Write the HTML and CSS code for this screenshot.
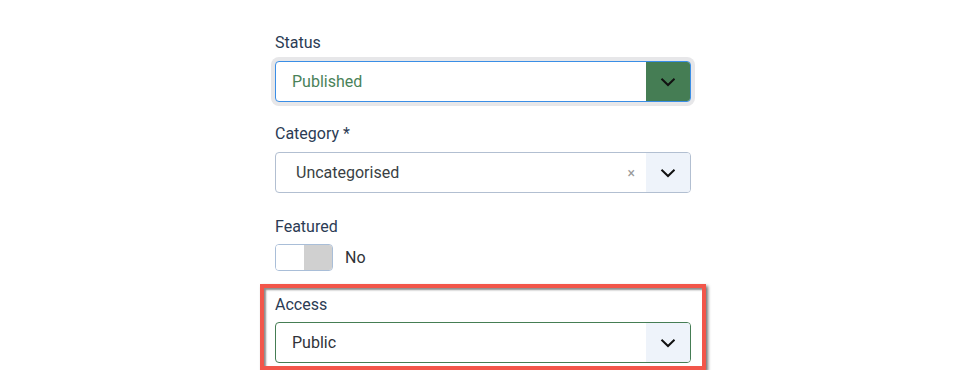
FILE: index.html
```html
<!DOCTYPE html>
<html>
<head>
<meta charset="utf-8">
<link rel="stylesheet" href="styles.css">
</head>
<body>
<div class="form">
  <div class="field">
    <label class="lbl">Status</label>
    <div class="select select-status">
      <span class="value">Published</span>
      <span class="btn btn-green">
        <svg width="16" height="10" viewBox="0 0 16 10"><path d="M1.5 1.8 L8 8 L14.5 1.8" fill="none" stroke="#111" stroke-width="2"/></svg>
      </span>
    </div>
  </div>
  <div class="field field-cat">
    <label class="lbl">Category *</label>
    <div class="select select-cat">
      <span class="value value-cat">Uncategorised</span>
      <span class="clear">×</span>
      <span class="btn btn-light">
        <svg width="16" height="10" viewBox="0 0 16 10"><path d="M1.5 1.8 L8 8 L14.5 1.8" fill="none" stroke="#111" stroke-width="2"/></svg>
      </span>
    </div>
  </div>
  <div class="field">
    <label class="lbl">Featured</label>
    <div class="switch-row">
      <span class="switch"><span class="sw-off"></span><span class="sw-on"></span></span>
      <span class="sw-text">No</span>
    </div>
  </div>
  <div class="highlight">
    <label class="lbl">Access</label>
    <div class="select select-access">
      <span class="value">Public</span>
      <span class="btn btn-light">
        <svg width="16" height="10" viewBox="0 0 16 10"><path d="M1.5 1.8 L8 8 L14.5 1.8" fill="none" stroke="#111" stroke-width="2"/></svg>
      </span>
    </div>
  </div>
</div>
</body>
</html>
```
FILE: styles.css
```css
html, body {
  margin: 0;
  padding: 0;
  background: #fff;
}
body {
  font-family: Roboto, "Liberation Sans", sans-serif;
  font-size: 16px;
  color: #22262a;
}
.form {
  width: 416px;
  margin-left: 275px;
  padding-top: 31px;
}
.field {
  margin-bottom: 20px;
}
.field-cat {
  margin-bottom: 22px;
}
.lbl {
  display: block;
  line-height: 24px;
  height: 24px;
  color: #2b3b54;
  margin-bottom: 6px;
}
.select {
  box-sizing: border-box;
  height: 41px;
  display: flex;
  align-items: stretch;
  border: 1px solid #b2bfd1;
  border-radius: 4px;
  overflow: hidden;
  background: #fff;
}
.value {
  flex: 1;
  display: flex;
  align-items: center;
  padding-left: 16px;
  color: #2f3338;
}
.select-status {
  border-color: #3a8ee6;
  box-shadow: 0 0 0 4px #e7e7e9;
}
.select-status .value {
  color: #4a8259;
}
.value-cat {
  padding-left: 20px;
  color: #3a3f44;
}
.btn {
  width: 44px;
  display: flex;
  align-items: center;
  justify-content: center;
}
.btn-green {
  background: #457d54;
}
.btn-light {
  background: #eef3fa;
}
.clear {
  display: flex;
  align-items: center;
  color: #9a9a9a;
  font-size: 14px;
  padding-right: 11px;
}
.switch-row {
  display: flex;
  align-items: center;
  margin-top: -1px;
}
.switch {
  box-sizing: border-box;
  width: 58px;
  height: 27px;
  border: 1px solid #a9bed8;
  border-radius: 4px;
  display: flex;
  overflow: hidden;
}
.sw-off {
  flex: 1;
  background: #fff;
}
.sw-on {
  flex: 1;
  background: #d0d0d0;
}
.sw-text {
  margin-left: 12px;
  color: #2f3338;
}
.highlight {
  margin-left: -15px;
  margin-top: -7px;
  width: 446px;
  box-sizing: border-box;
  border: 4px solid #f2564a;
  padding: 5px 11px 3px 11px;
  box-shadow: 2px 2px 3px rgba(0,0,0,0.55), inset 2px 2px 2px rgba(0,0,0,0.45);
}
.highlight .lbl {
  margin-bottom: 5px;
}
.select-access {
  border-color: #457d54;
}
```
